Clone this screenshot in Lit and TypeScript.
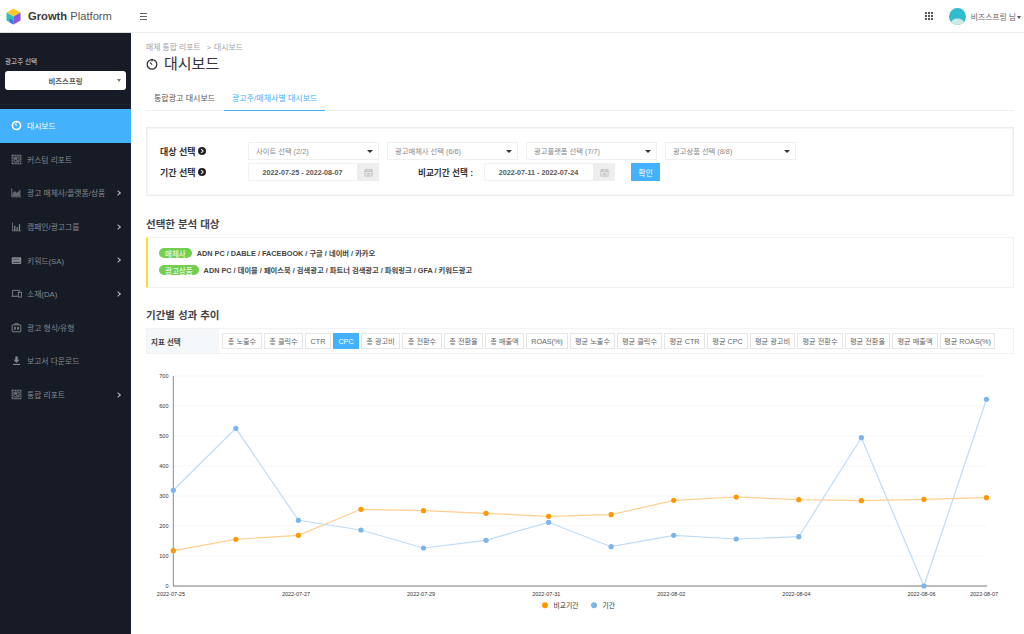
import { LitElement, html, css, svg } from "lit";
import { customElement } from "lit/decorators.js";

const icons: Record<string, unknown> = {
  clock: svg`<circle cx="7" cy="7" r="5.2" fill="none" stroke="currentColor" stroke-width="2"/><path d="M4.8 4.6l2.6 2.6M7 1.5v2.5" stroke="currentColor" stroke-width="1.3" fill="none"/>`,
  report: svg`<path d="M1.5 1.5h11v11h-11z" fill="none" stroke="currentColor" stroke-width="1.3" stroke-dasharray="2.4 .6"/><path d="M3.8 3.8h6.4v6.4H3.8z" fill="none" stroke="currentColor" stroke-width="1"/><path d="M4.5 4.5h3.5v2.8H4.5z" fill="currentColor" opacity=".8"/><path d="M6.8 8h2.6v1.6H6.8z" fill="currentColor" opacity=".8"/>`,
  area: svg`<path d="M1 2v10.5h12" fill="none" stroke="currentColor" stroke-width="1"/><path d="M2 11.5V8l3-3 2.5 2.5L12 3v8.5z" fill="currentColor" opacity=".7"/>`,
  bars: svg`<path d="M2 2v10.5M2 12.5h11" stroke="currentColor" fill="none"/><path d="M4 6h1.6v6H4zM7 8h1.6v4H7zM10 4h1.6v8H10z" fill="currentColor"/>`,
  keyboard: svg`<rect x="1" y="3" width="12" height="8.5" rx="1" fill="currentColor"/><path d="M3 9.3h8" stroke="#161b26"/><path d="M3 5.5h8" stroke="#161b26" stroke-dasharray="1 1"/>`,
  device: svg`<path d="M2 10V3h9v2" fill="none" stroke="currentColor" stroke-width="1.1"/><path d="M0.5 10.5h8" stroke="currentColor" stroke-width="1.3"/><rect x="9.3" y="5.5" width="4" height="6" fill="none" stroke="currentColor" stroke-width="1.1"/>`,
  bag: svg`<rect x="1.5" y="3.5" width="11" height="9" rx="1" fill="none" stroke="currentColor" stroke-width="1.2"/><path d="M5 3.5V2h4v1.5" fill="none" stroke="currentColor"/><path d="M4 6h2v4H4zM8 6h2v4H8z" fill="currentColor"/>`,
  download: svg`<path d="M5.5 2h3v4H11L7 10 3 6h2.5z" fill="currentColor"/><path d="M2.5 12h9" stroke="currentColor" stroke-width="1.4"/>`,
};

const nav = [
  ["clock", "대시보드", false, true],
  ["report", "커스텀 리포트", false, false],
  ["area", "광고 매체사/플랫폼/상품", true, false],
  ["bars", "캠페인/광고그룹", true, false],
  ["keyboard", "키워드(SA)", true, false],
  ["device", "소재(DA)", true, false],
  ["bag", "광고 형식/유형", false, false],
  ["download", "보고서 다운로드", false, false],
  ["report", "통합 리포트", true, false],
] as const;

const metrics: [string, number][] = [
  ["총 노출수", 40], ["총 클릭수", 39], ["CTR", 26], ["CPC", 26], ["총 광고비", 39], ["총 전환수", 40],
  ["총 전환율", 39], ["총 매출액", 39], ["ROAS(%)", 42], ["평균 노출수", 45], ["평균 클릭수", 45],
  ["평균 CTR", 41], ["평균 CPC", 41], ["평균 광고비", 45], ["평균 전환수", 46], ["평균 전환율", 45],
  ["평균 매출액", 46], ["평균 ROAS(%)", 55],
];

const blue = [490.3, 428.3, 520.3, 530, 548, 540.3, 522.3, 546.7, 535.3, 539, 536.7, 437.7, 586, 399.3];
const orange = [550.7, 539.3, 535.3, 509.3, 510.7, 513.3, 516.3, 514.7, 500.3, 497, 499.7, 500.7, 499.3, 497.7];
const px = (i: number) => 173.3 + i * 62.55;
const TOP = 360;

@customElement("app-root")
export class AppRoot extends LitElement {
  static styles = css`
    :host { display: block; width: 1024px; height: 634px; overflow: hidden; background: #fff; font-family: "Liberation Sans", "Noto Sans CJK KR", sans-serif; color: #444; }
    .shell { display: flex; height: 634px; }
    .side { width: 131px; flex: none; background: #161b26; color: #9a9da3; display: flex; flex-direction: column; }
    .logo { height: 32px; background: #fff; border-bottom: 1px solid #ddd; display: flex; align-items: center; gap: 7px; padding-left: 6px; font-size: 11.2px; color: #333; }
    .logo b { font-weight: 700; color: #3a3a3a; }
    .logo span { color: #555; }
    .adv { padding: 24px 5px 14px; border-bottom: 1px solid #1e2430; }
    .adv label { display: block; font-size: 6.6px; color: #d5d6d9; line-height: 10px; margin-bottom: 4px; }
    .adv-select { height: 19px; background: #fff; border-radius: 3px; display: flex; align-items: center; justify-content: center; position: relative; font-size: 7.4px; font-weight: 700; color: #555; }
    .adv-select::after { content: ""; position: absolute; right: 5px; top: 8px; border: 2.5px solid transparent; border-top: 3px solid #777; border-bottom: 0; }
    .nav { margin-top: 4px; display: flex; flex-direction: column; }
    .item { height: 33.6px; display: flex; align-items: center; padding: 0 10px 0 11px; font-size: 7.8px; gap: 5px; color: #85888e; }
    .item svg { width: 11px; height: 11px; flex: none; }
    .item .label { flex: 1; white-space: nowrap; }
    .item.active { background: #43b1fb; color: #fff; }
    .chev { width: 3px; height: 3px; border-top: 1.4px solid #bbb; border-right: 1.4px solid #bbb; transform: rotate(45deg); flex: none; margin-right: 1px; }
    .main { flex: 1; min-width: 0; display: flex; flex-direction: column; }
    .top { height: 32px; flex: none; border-bottom: 1px solid #eee; display: flex; align-items: center; padding: 0 3px 0 9px; }
    .burger { width: 7px; height: 5px; border-top: 1px solid #666; border-bottom: 1px solid #666; position: relative; }
    .burger::after { content: ""; position: absolute; left: 0; right: 0; top: 2px; height: 1px; background: #666; }
    .spacer { flex: 1; }
    .grid { display: grid; grid-template-columns: repeat(3, 2px); gap: 1px; margin-right: 16px; }
    .grid i { width: 2px; height: 2px; background: #555; display: block; }
    .avatar { width: 17px; height: 17px; margin-right: 5px; }
    .user { font-size: 7.8px; color: #666; white-space: nowrap; }
    .caret { display: inline-block; margin-left: 1px; vertical-align: middle; border: 2.5px solid transparent; border-top: 3px solid #555; border-bottom: 0; }
    .page { padding: 9px 10px 0 15px; display: flex; flex-direction: column; }
    .crumb { font-size: 7.8px; color: #a3a3a3; line-height: 11px; }
    .crumb span { margin: 0 3px 0 6px; }
    .title { display: flex; align-items: center; gap: 6px; font-size: 15px; color: #333; line-height: 20px; margin-top: 1px; }
    .title svg { width: 12px; height: 12px; }
    .tabs { display: flex; margin-top: 10px; border-bottom: 1px solid #f0f0f0; height: 26px; }
    .tab { font-size: 8px; color: #555; padding: 8px 0 0 8px; width: 78px; white-space: nowrap; box-sizing: border-box; height: 27px; }
    .tab.on { color: #43b1fb; border-bottom: 1px solid #43b1fb; width: 101px; }
    .filter { margin-top: 16px; height: 69px; box-sizing: border-box; border: 1px solid #eee; box-shadow: inset 0 0 0 1px #f6f6f6; padding: 14px 13px 0; display: flex; flex-direction: column; gap: 3px; }
    .row { display: flex; align-items: center; }
    .flabel { width: 88px; flex: none; display: flex; align-items: center; gap: 2px; font-size: 9px; font-weight: 700; color: #333; white-space: nowrap; }
    .flabel svg { width: 8px; height: 8px; }
    .selects { display: flex; gap: 8px; }
    .sel { width: 131px; height: 18px; box-sizing: border-box; border: 1px solid #f0f0f0; display: flex; align-items: center; padding: 0 5px 0 7px; font-size: 7.3px; color: #888; white-space: nowrap; }
    .sel span { flex: 1; }
    .sel::after { content: ""; border: 3px solid transparent; border-top: 3px solid #333; border-bottom: 0; }
    .date { width: 131px; height: 18px; box-sizing: border-box; border: 1px solid #f2f2f2; display: flex; align-items: center; font-size: 7.2px; font-weight: 700; color: #555; }
    .date span { flex: 1; text-align: center; padding-right: 1px; }
    .addon { width: 22px; height: 18px; flex: none; background: #eee; display: flex; align-items: center; justify-content: center; margin-right: -1px; }
    .addon svg { width: 9px; height: 9px; }
    .cmp { font-size: 8.6px; font-weight: 700; color: #333; margin: 0 11px 0 39px; width: 55px; white-space: nowrap; }
    .confirm { margin-left: 16px; width: 29px; height: 18px; background: #43b1fb; color: #fff; font-size: 8px; display: flex; align-items: center; justify-content: center; }
    h2 { margin: 0; font-size: 10.5px; font-weight: 700; color: #444; line-height: 14px; }
    .h1 { margin-top: 21px; }
    .picked { margin-top: 6px; height: 51px; box-sizing: border-box; border: 1px solid #f2f2f2; border-left: 2px solid #ffd92e; padding: 10px 0 0 11px; display: flex; flex-direction: column; gap: 7px; }
    .pline { display: flex; align-items: center; gap: 5px; font-size: 7.3px; font-weight: 700; color: #444; height: 10px; white-space: nowrap; }
    .pill { background: #74cf51; color: #fff; border-radius: 5px; padding: 0 6px; height: 10px; display: flex; align-items: center; font-size: 7.5px; font-weight: 400; }
    .h2 { margin-top: 20px; }
    .metrics { margin-top: 6px; height: 26px; box-sizing: border-box; border: 1px solid #f2f2f2; display: flex; align-items: center; }
    .mlabel { width: 72px; height: 100%; flex: none; background: #f5f8fb; display: flex; align-items: center; padding-left: 4px; box-sizing: border-box; font-size: 7.5px; font-weight: 700; color: #444; }
    .mbtns { display: flex; gap: 2px; margin-left: 3px; }
    .mbtn { height: 16px; box-sizing: border-box; border: 1px solid #e6e6e6; display: flex; align-items: center; justify-content: center; font-size: 7.2px; color: #666; white-space: nowrap; }
    .mbtn.on { background: #43b1fb; border-color: #43b1fb; color: #fff; }
    .chart { display: block; margin: 6px 0 0 -146px; width: 1024px; height: 274px; flex: none; }
    .chart text { font-family: "Liberation Sans", "Noto Sans CJK KR", sans-serif; font-size: 5.5px; fill: #333; }
  `;

  private dateAddon() {
    return html`<div class="addon"><svg viewBox="0 0 10 10"><path d="M1 2h8v7H1zM1 4h8M3 1v2M7 1v2M3 6h4M3 7.5h4" fill="none" stroke="#aaa" stroke-width=".7"/></svg></div>`;
  }

  private arrow() {
    return html`<svg viewBox="0 0 10 10"><circle cx="5" cy="5" r="5" fill="#222"/><path d="M4 2.6L6.4 5 4 7.4" fill="none" stroke="#fff" stroke-width="1.3"/></svg>`;
  }

  private chart() {
    const y = (v: number) => v - TOP;
    const baseline = 586 - TOP;
    const ticks = [0, 100, 200, 300, 400, 500, 600, 700];
    const labels: [number, string][] = [
      [0, "2022-07-25"], [2, "2022-07-27"], [4, "2022-07-29"], [6, "2022-07-31"], [8, "2022-08-02"],
      [10, "2022-08-04"], [12, "2022-08-06"], [13, "2022-08-07"],
    ];
    const line = (arr: number[]) => arr.map((v, i) => `${px(i)},${y(v)}`).join(" ");
    return html`<svg class="chart" viewBox="0 0 1024 274">
      ${ticks.slice(1).map((t) => svg`<line x1="174" x2="986" y1=${baseline - t * 0.3} y2=${baseline - t * 0.3} stroke="#f3f3f3" stroke-width="1" stroke-dasharray="2 1"/>`)}
      ${ticks.map((t) => svg`<text x="168.5" y=${baseline - t * 0.3 + 2.1} text-anchor="end">${t}</text>`)}
      <line x1="173.3" x2="173.3" y1="16" y2=${baseline} stroke="#8a8a8a" stroke-width="1"/>
      <line x1="173" x2="987" y1=${baseline} y2=${baseline} stroke="#777" stroke-width="1"/>
      ${labels.map(([i, l]) => svg`<text x=${px(i) - 2.4} y="236.3" text-anchor="middle">${l}</text>`)}
      <polyline points=${line(orange)} fill="none" stroke="#ffd08f" stroke-width="1.2"/>
      <polyline points=${line(blue)} fill="none" stroke="#bfdcf7" stroke-width="1.2"/>
      ${orange.map((v, i) => svg`<circle cx=${px(i)} cy=${y(v)} r="2.6" fill="#ff9800"/>`)}
      ${blue.map((v, i) => svg`<circle cx=${px(i)} cy=${y(v)} r="2.6" fill="#7cb5ec"/>`)}
      <circle cx="545" cy="245.3" r="3" fill="#ff9800"/>
      <text x="553.5" y="247.5" style="font-size:6.8px">비교기간</text>
      <circle cx="594" cy="245.3" r="3" fill="#7cb5ec"/>
      <text x="602.5" y="247.5" style="font-size:6.8px">기간</text>
    </svg>`;
  }

  render() {
    return html`<div class="shell">
      <aside class="side">
        <div class="logo">
          <svg width="15" height="17" viewBox="0 0 15 17">
            <path d="M7.5 0.5L14.5 4.5 7.5 8.5 0.5 4.5z" fill="#ffc928"/>
            <path d="M0.5 4.5L7.5 8.5V16.5L0.5 12.5z" fill="#2fc0b8"/>
            <path d="M14.5 4.5L7.5 8.5V16.5L14.5 12.5z" fill="#8a55e0"/>
            <path d="M7.5 12.5L7.5 16.5 3.5 14.2 3.5 10.2z" fill="#4a70e0"/>
          </svg>
          <div><b>Growth</b> <span>Platform</span></div>
        </div>
        <div class="adv">
          <label>광고주 선택</label>
          <div class="adv-select">비즈스프링</div>
        </div>
        <nav class="nav">
          ${nav.map(([ic, label, chev, active]) => html`<div class="item ${active ? "active" : ""}">
            <svg viewBox="0 0 14 14">${icons[ic]}</svg>
            <span class="label">${label}</span>
            ${chev ? html`<i class="chev"></i>` : ""}
          </div>`)}
        </nav>
      </aside>
      <main class="main">
        <header class="top">
          <div class="burger"></div>
          <div class="spacer"></div>
          <div class="grid">${Array.from({ length: 9 }, () => html`<i></i>`)}</div>
          <svg class="avatar" viewBox="0 0 17 17">
            <clipPath id="av"><circle cx="8.5" cy="8.5" r="8.5"/></clipPath>
            <circle cx="8.5" cy="8.5" r="8.5" fill="#2fbcd0"/>
            <g clip-path="url(#av)"><circle cx="8.5" cy="6.8" r="3.2" fill="#2fbcd0"/><ellipse cx="8.5" cy="15" rx="6.5" ry="4.5" fill="#cfe9e6"/></g>
          </svg>
          <div class="user">비즈스프링 님<i class="caret"></i></div>
        </header>
        <div class="page">
          <div class="crumb">매체 통합 리포트<span>&gt;</span>대시보드</div>
          <div class="title">
            <svg viewBox="0 0 14 14"><circle cx="7" cy="7.5" r="5.6" fill="none" stroke="#333" stroke-width="1.5"/><path d="M4.6 5.2L7.2 7.8M7 1v3" stroke="#333" stroke-width="1.3" fill="none"/></svg>
            대시보드
          </div>
          <div class="tabs">
            <div class="tab">통합광고 대시보드</div>
            <div class="tab on">광고주/매체사별 대시보드</div>
          </div>
          <section class="filter">
            <div class="row">
              <div class="flabel">대상 선택 ${this.arrow()}</div>
              <div class="selects">
                ${["사이트 선택 (2/2)", "광고매체사 선택 (6/6)", "광고플랫폼 선택 (7/7)", "광고상품 선택 (8/8)"].map(
                  (s) => html`<div class="sel"><span>${s}</span></div>`
                )}
              </div>
            </div>
            <div class="row">
              <div class="flabel">기간 선택 ${this.arrow()}</div>
              <div class="date"><span>2022-07-25 - 2022-08-07</span>${this.dateAddon()}</div>
              <div class="cmp">비교기간 선택 :</div>
              <div class="date"><span>2022-07-11 - 2022-07-24</span>${this.dateAddon()}</div>
              <div class="confirm">확인</div>
            </div>
          </section>
          <h2 class="h1">선택한 분석 대상</h2>
          <section class="picked">
            <div class="pline"><span class="pill">매체사</span>ADN PC / DABLE / FACEBOOK / 구글 / 네이버 / 카카오</div>
            <div class="pline"><span class="pill">광고상품</span>ADN PC / 데이블 / 페이스북 / 검색광고 / 파트너 검색광고 / 파워링크 / GFA / 키워드광고</div>
          </section>
          <h2 class="h2">기간별 성과 추이</h2>
          <section class="metrics">
            <div class="mlabel">지표 선택</div>
            <div class="mbtns">
              ${metrics.map(([m, w]) => html`<div class="mbtn ${m === "CPC" ? "on" : ""}" style="width:${w}px">${m}</div>`)}
            </div>
          </section>
          ${this.chart()}
        </div>
      </main>
    </div>`;
  }
}
